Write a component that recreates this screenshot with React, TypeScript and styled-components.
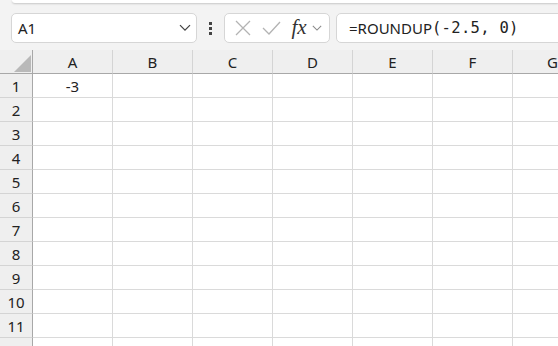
import React from 'react';
import styled, { createGlobalStyle } from 'styled-components';

const GlobalStyle = createGlobalStyle`
  html, body {
    margin: 0;
    padding: 0;
    background: #f3f3f3;
    font-family: "Noto Sans", "Open Sans", sans-serif;
  }
  * { box-sizing: border-box; }
`;

const Page = styled.div`
  width: 558px;
  height: 346px;
  overflow: hidden;
  background: #f3f3f3;
`;

const Ribbon = styled.div`
  height: 3px;
  margin-left: 12px;
  background: #fff;
  border-radius: 0 0 0 8px;
  box-shadow: 0 1px 2px rgba(0, 0, 0, 0.18);
`;

const FormulaRow = styled.div`
  display: flex;
  align-items: center;
  height: 30px;
  margin-top: 10px;
  padding-left: 11px;
`;

const Box = styled.div`
  height: 30px;
  background: #fff;
  border: 1px solid #d6d6d6;
  border-radius: 5px;
  display: flex;
  align-items: center;
`;

const NameBox = styled(Box)`
  width: 186px;
  padding: 0 5px 0 6px;
  justify-content: space-between;
  font-size: 15px;
  color: #222;
`;

const Dots = styled.div`
  width: 27px;
  display: flex;
  flex-direction: column;
  align-items: center;
  gap: 2px;

  span {
    width: 3px;
    height: 3px;
    background: #444;
  }
`;

const FxGroup = styled(Box)`
  width: 106px;
  padding-left: 6px;
  gap: 0;
`;

const IconSlot = styled.div<{ $w: number }>`
  width: ${p => p.$w}px;
  display: flex;
  align-items: center;
  justify-content: center;
`;

const Fx = styled.span`
  font-family: "Liberation Serif", "DejaVu Serif", serif;
  font-style: italic;
  font-size: 21px;
  color: #333;
  line-height: 1;
  margin-top: -2px;
`;

const FormulaInput = styled(Box)`
  flex: 1;
  margin-left: 6px;
  margin-right: -6px;
  padding-left: 12px;
  font-size: 15px;
  color: #222;
  white-space: pre;
`;

const Mono = styled.span`
  font-family: "DejaVu Sans Mono", "Liberation Mono", monospace;
  font-size: 15.5px;
  letter-spacing: 0.3px;
`;

const Grid = styled.div`
  margin-top: 7px;
  display: grid;
  grid-template-columns: 33px repeat(7, 80px);
  grid-auto-rows: 24px;
  font-size: 15px;
  color: #222;
`;

const Corner = styled.div`
  position: relative;
  background: #efefef;
  border-right: 1px solid #a8a8a8;
  border-bottom: 1px solid #a8a8a8;
`;

const CornerTriangle = styled.div`
  position: absolute;
  right: 1px;
  bottom: 1px;
  width: 0;
  height: 0;
  border-left: 17px solid transparent;
  border-bottom: 17px solid #b9b9b9;
`;

const ColHead = styled.div`
  background: #efefef;
  border-right: 1px solid #d4d4d4;
  border-bottom: 1px solid #a8a8a8;
  display: flex;
  align-items: center;
  justify-content: center;
`;

const RowHead = styled.div`
  background: #efefef;
  border-right: 1px solid #a8a8a8;
  border-bottom: 1px solid #d4d4d4;
  display: flex;
  align-items: center;
  justify-content: center;
`;

const Cell = styled.div`
  background: #fff;
  border-right: 1px solid #dadada;
  border-bottom: 1px solid #dadada;
  display: flex;
  align-items: center;
  justify-content: center;
`;

const Chevron = ({ color, size }: { color: string; size: number }) => (
  <svg width={size} height={size * 0.6} viewBox="0 0 12 7" fill="none">
    <path d="M1 1l5 5 5-5" stroke={color} strokeWidth="1.3" />
  </svg>
);

const columns = ['A', 'B', 'C', 'D', 'E', 'F', 'G'];
const rows = Array.from({ length: 12 }, (_, i) => i + 1);
const data: Record<string, string> = { A1: '-3' };

export default function App() {
  return (
    <Page>
      <GlobalStyle />
      <Ribbon />
      <FormulaRow>
        <NameBox>
          <span>A1</span>
          <Chevron color="#444" size={12} />
        </NameBox>
        <Dots>
          <span />
          <span />
          <span />
        </Dots>
        <FxGroup>
          <IconSlot $w={23}>
            <svg width="16" height="16" viewBox="0 0 16 16">
              <path d="M1 1l14 14M15 1L1 15" stroke="#b3b3b3" strokeWidth="1.3" />
            </svg>
          </IconSlot>
          <IconSlot $w={34}>
            <svg width="19" height="14" viewBox="0 0 19 14">
              <path d="M1 7l6 6L18 1" stroke="#b3b3b3" strokeWidth="1.3" fill="none" />
            </svg>
          </IconSlot>
          <IconSlot $w={22}>
            <Fx>fx</Fx>
          </IconSlot>
          <IconSlot $w={13}>
            <Chevron color="#8a8a8a" size={10} />
          </IconSlot>
        </FxGroup>
        <FormulaInput>
          =ROUNDUP<Mono>(-2.5, 0)</Mono>
        </FormulaInput>
      </FormulaRow>
      <Grid>
        <Corner>
          <CornerTriangle />
        </Corner>
        {columns.map(c => (
          <ColHead key={c}>{c}</ColHead>
        ))}
        {rows.map(r => (
          <React.Fragment key={r}>
            <RowHead>{r}</RowHead>
            {columns.map(c => (
              <Cell key={c}>{data[`${c}${r}`] ?? ''}</Cell>
            ))}
          </React.Fragment>
        ))}
      </Grid>
    </Page>
  );
}
